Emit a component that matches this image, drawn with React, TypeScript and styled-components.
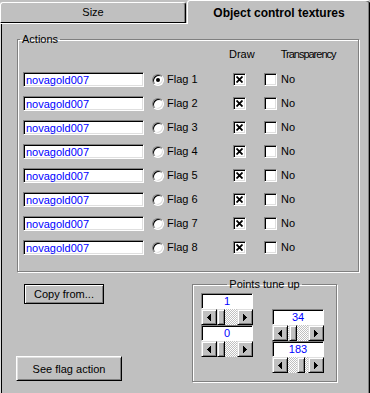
import React from 'react';
import styled, { createGlobalStyle, css } from 'styled-components';

const GlobalStyle = createGlobalStyle`
  html, body {
    margin: 0;
    padding: 0;
    background: #c0c0c0;
  }
  body {
    font-family: "Liberation Sans", Arial, sans-serif;
    font-size: 11px;
    color: #000;
  }
`;

const Window = styled.div`
  width: 370px;
  height: 393px;
  display: flex;
  flex-direction: column;
  background: #c0c0c0;
  overflow: hidden;
  font-family: "Liberation Sans", Arial, sans-serif;
  font-size: 11px;
  line-height: 13px;
`;

const TabStrip = styled.div`
  display: flex;
  height: 23px;
  flex-shrink: 0;
`;

const Tab = styled.div<{ $active?: boolean }>`
  box-sizing: border-box;
  text-align: center;
  border-top: 1px solid #fff;
  border-left: 1px solid #fff;
  border-radius: 3px 3px 0 0;
  ${p => p.$active ? css`
    position: relative;
    z-index: 1;
    width: 183px;
    margin-left: 1px;
    height: 24px;
    padding-top: 5px;
    font-size: 12px;
    line-height: 14px;
    font-weight: bold;
    background: #c0c0c0;
    box-shadow: inset -1px 0 0 #000, inset -2px 0 0 #808080;
  ` : css`
    width: 186px;
    margin-top: 2px;
    height: 21px;
    padding-top: 3px;
    border-right: 1px solid #000;
    border-bottom: 1px solid #000;
    box-shadow: inset -1px 0 0 #808080;
  `}
`;

const Panel = styled.div`
  flex: 1;
  display: flex;
  flex-direction: column;
  border-top: 1px solid #fff;
  padding: 9px 0 0 17px;
  box-shadow: inset 1px 0 0 #dfdfdf, inset 2px 0 0 #000,
    inset -1px 0 0 #000, inset -2px 0 0 #808080;
`;

// etched frame, like a win95 group box
const Group = styled.fieldset<{ $w: number; $h: number }>`
  box-sizing: border-box;
  width: ${p => p.$w}px;
  height: ${p => p.$h}px;
  margin: 0;
  padding: 0;
  min-width: 0;
  border: 1px solid #808080;
  box-shadow: inset 1px 1px 0 #fff, 1px 1px 0 #fff;
`;

const Legend = styled.legend<{ $center?: boolean }>`
  padding: 0 2px;
  margin-left: 2px;
  line-height: 13px;
  ${p => p.$center && css`
    margin-left: auto;
    margin-right: auto;
  `}
`;

const HeaderRow = styled.div`
  display: flex;
  gap: 26px;
  margin-top: 2px;
  padding-left: 211px;
  height: 13px;
`;

const ColTitle = styled.span<{ $tight?: boolean }>`
  white-space: nowrap;
  letter-spacing: ${p => (p.$tight ? '-1px' : '0')};
`;

const Rows = styled.div`
  display: flex;
  flex-direction: column;
  gap: 9px;
  margin-top: 11px;
  padding-left: 5px;
`;

const Row = styled.div`
  display: grid;
  grid-template-columns: 129px 81px 31px auto;
  align-items: center;
  height: 15px;
`;

const TextField = styled.input`
  box-sizing: border-box;
  width: 121px;
  height: 15px;
  margin: 0;
  padding: 0 0 0 2px;
  border: 1px solid;
  border-color: #808080 #fff #fff #808080;
  box-shadow: inset 1px 1px 0 #000, inset -1px -1px 0 #dfdfdf;
  background: #fff;
  color: #0000ff;
  font: 11px "Liberation Sans", Arial, sans-serif;
  outline: none;
`;

const Labelled = styled.label`
  display: flex;
  align-items: center;
  gap: 3px;
  white-space: nowrap;
`;

const Radio = styled.span<{ $checked?: boolean }>`
  box-sizing: border-box;
  width: 12px;
  height: 12px;
  border-radius: 50%;
  background: #fff;
  border: 1px solid;
  border-color: #808080 #fff #fff #808080;
  box-shadow: inset 1px 1px 0 #000, inset -1px -1px 0 #dfdfdf;
  display: inline-flex;
  align-items: center;
  justify-content: center;
  &::after {
    content: '';
    display: ${p => (p.$checked ? 'block' : 'none')};
    width: 4px;
    height: 4px;
    border-radius: 50%;
    background: #000;
  }
`;

const CheckBox = styled.span`
  box-sizing: border-box;
  width: 13px;
  height: 13px;
  background: #fff;
  border: 1px solid;
  border-color: #808080 #fff #fff #808080;
  box-shadow: inset 1px 1px 0 #000, inset -1px -1px 0 #dfdfdf;
  display: inline-flex;
  align-items: center;
  justify-content: center;
  flex-shrink: 0;
`;

const Bottom = styled.div`
  display: flex;
  margin-left: -1px;
`;

const ButtonCol = styled.div`
  width: 176px;
  display: flex;
  flex-direction: column;
  align-items: flex-start;
  gap: 52px;
  padding-top: 12px;
`;

const Button = styled.button<{ $w: number; $h: number; $default?: boolean; $indent?: number }>`
  box-sizing: border-box;
  width: ${p => p.$w}px;
  height: ${p => p.$h}px;
  margin: 0 0 0 ${p => p.$indent || 0}px;
  padding: 0;
  background: #c0c0c0;
  color: #000;
  font: 11px "Liberation Sans", Arial, sans-serif;
  border: 1px solid;
  ${p => p.$default ? css`
    border-color: #000;
    box-shadow: inset 1px 1px 0 #fff, inset -1px -1px 0 #808080;
  ` : css`
    border-color: #fff #000 #000 #fff;
    box-shadow: inset 1px 1px 0 #dfdfdf, inset -1px -1px 0 #808080;
  `}
`;

const PointsWrap = styled.div`
  margin-top: 6px;
`;

const SpinCols = styled.div`
  display: flex;
  align-items: flex-start;
  gap: 19px;
  padding-left: 8px;
`;

const SpinCol = styled.div<{ $top: number }>`
  display: flex;
  flex-direction: column;
  width: 52px;
  margin-top: ${p => p.$top}px;
`;

const SpinEdit = styled.div`
  box-sizing: border-box;
  height: 16px;
  background: #fff;
  border: 1px solid;
  border-color: #808080 #fff #fff #808080;
  box-shadow: inset 1px 1px 0 #000;
  color: #0000ff;
  text-align: center;
  line-height: 14px;
`;

const ScrollBar = styled.div`
  display: flex;
  height: 16px;
`;

const raised = css`
  box-sizing: border-box;
  background: #c0c0c0;
  border: 1px solid;
  border-color: #dfdfdf #000 #000 #dfdfdf;
  box-shadow: inset 1px 1px 0 #fff, inset -1px -1px 0 #808080;
`;

const ArrowButton = styled.div`
  ${raised};
  width: 16px;
  height: 16px;
  display: flex;
  align-items: center;
  justify-content: center;
`;

const Track = styled.div`
  position: relative;
  flex: 1;
  background-color: #fff;
  background-image: repeating-conic-gradient(#c0c0c0 0 25%, #fff 0 50%);
  background-size: 2px 2px;
`;

const Thumb = styled.div<{ $pos: number }>`
  ${raised};
  position: absolute;
  top: 0;
  left: ${p => p.$pos}px;
  width: 8px;
  height: 16px;
`;

const Arrow = ({ dir }: { dir: 'left' | 'right' }) => (
  <svg width="4" height="7" viewBox="0 0 4 7" style={{ transform: dir === 'right' ? 'scaleX(-1)' : undefined }}>
    <path d="M3 0h1v7h-1z M2 1h1v5h-1z M1 2h1v3h-1z M0 3h1v1h-1z" fill="#000" />
  </svg>
);

const Cross = () => (
  <svg width="7" height="7" viewBox="0 0 7 7">
    <path d="M0.5 0.5L6.5 6.5M6.5 0.5L0.5 6.5" stroke="#000" strokeWidth="1.8" />
  </svg>
);

function Spin({ value, pos }: { value: string; pos: number }) {
  return (
    <>
      <SpinEdit>{value}</SpinEdit>
      <ScrollBar>
        <ArrowButton><Arrow dir="left" /></ArrowButton>
        <Track><Thumb $pos={pos} /></Track>
        <ArrowButton><Arrow dir="right" /></ArrowButton>
      </ScrollBar>
    </>
  );
}

const flags = [1, 2, 3, 4, 5, 6, 7, 8];

export default function App() {
  return (
    <>
      <GlobalStyle />
      <Window>
        <TabStrip>
          <Tab>Size</Tab>
          <Tab $active>Object control textures</Tab>
        </TabStrip>
        <Panel>
          <Group $w={342} $h={239}>
            <Legend>Actions</Legend>
            <HeaderRow>
              <ColTitle>Draw</ColTitle>
              <ColTitle $tight>Transparency</ColTitle>
            </HeaderRow>
            <Rows>
              {flags.map(n => (
                <Row key={n}>
                  <TextField readOnly value="novagold007" />
                  <Labelled>
                    <Radio $checked={n === 1} />
                    Flag {n}
                  </Labelled>
                  <CheckBox><Cross /></CheckBox>
                  <Labelled>
                    <CheckBox />
                    <span style={{ marginLeft: 1 }}>No</span>
                  </Labelled>
                </Row>
              ))}
            </Rows>
          </Group>
          <Bottom>
            <ButtonCol>
              <Button $w={80} $h={20} $indent={8} $default>Copy from...</Button>
              <Button $w={106} $h={25}>See flag action</Button>
            </ButtonCol>
            <PointsWrap>
              <Group $w={145} $h={104}>
                <Legend $center>Points tune up</Legend>
                <SpinCols>
                  <SpinCol $top={2}>
                    <Spin value="1" pos={0} />
                    <Spin value="0" pos={0} />
                  </SpinCol>
                  <SpinCol $top={18}>
                    <Spin value="34" pos={1} />
                    <Spin value="183" pos={9} />
                  </SpinCol>
                </SpinCols>
              </Group>
            </PointsWrap>
          </Bottom>
        </Panel>
      </Window>
    </>
  );
}
